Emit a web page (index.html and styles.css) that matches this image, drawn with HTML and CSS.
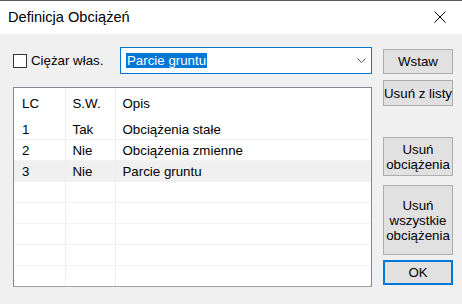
FILE: index.html
```html
<!DOCTYPE html>
<html lang="pl">
<head>
<meta charset="utf-8">
<title>Definicja Obciążeń</title>
<link rel="stylesheet" href="styles.css">
</head>
<body>
<div class="window">
  <div class="titlebar">
    <span class="title">Definicja Obciążeń</span>
    <span class="close">
      <svg width="12" height="12" viewBox="0 0 12 12"><path d="M0.5 0.5 L11.5 11.5 M11.5 0.5 L0.5 11.5" stroke="#000" stroke-width="1" fill="none"/></svg>
    </span>
  </div>
  <div class="content">
    <div class="main">
      <div class="toprow">
        <label class="check"><span class="box"></span><span class="check-label">Ciężar włas.</span></label>
        <div class="combo">
          <span class="sel">Parcie gruntu</span>
          <svg class="chev" width="9" height="5" viewBox="0 0 9 5"><path d="M0.5 0.5 L4.5 4.5 L8.5 0.5" stroke="#555" stroke-width="1" fill="none"/></svg>
        </div>
      </div>
      <div class="list">
        <table class="grid">
          <colgroup><col class="c1"><col class="c2"><col class="c3"></colgroup>
          <thead>
            <tr><th>LC</th><th>S.W.</th><th>Opis</th></tr>
          </thead>
          <tbody>
            <tr><td>1</td><td>Tak</td><td>Obciążenia stałe</td></tr>
            <tr><td>2</td><td>Nie</td><td>Obciążenia zmienne</td></tr>
            <tr class="hl"><td>3</td><td>Nie</td><td>Parcie gruntu</td></tr>
            <tr><td></td><td></td><td></td></tr>
            <tr><td></td><td></td><td></td></tr>
            <tr><td></td><td></td><td></td></tr>
            <tr><td></td><td></td><td></td></tr>
            <tr><td></td><td></td><td></td></tr>
          </tbody>
        </table>
      </div>
    </div>
    <div class="side">
      <button class="btn b-wstaw">Wstaw</button>
      <button class="btn b-usun">Usuń z listy</button>
      <button class="btn b-usun-obc">Usuń<br>obciążenia</button>
      <button class="btn b-usun-all">Usuń<br>wszystkie<br>obciążenia</button>
      <button class="btn b-ok">OK</button>
    </div>
  </div>
</div>
</body>
</html>
```

FILE: styles.css
```css
html, body {
  margin: 0;
  padding: 0;
  background: #f0f0f0;
}
.window {
  width: 462px;
  height: 304px;
  overflow: hidden;
  background: #f0f0f0;
  font-family: "Segoe UI", "Liberation Sans", Arial, sans-serif;
  font-size: 13.3px;
  color: #000;
  box-sizing: border-box;
  border-top: 1px solid #5a5a5a;
}
.titlebar {
  height: 33px;
  background: #fff;
  display: flex;
  align-items: center;
  justify-content: space-between;
}
.title {
  padding-left: 8px;
  font-size: 14.6px;
  padding-bottom: 2px;
}
.close {
  width: 44px;
  display: flex;
  justify-content: center;
  margin-right: 0;
  padding-bottom: 2px;
}
.content {
  display: grid;
  grid-template-columns: 359px 70px;
  column-gap: 11px;
  padding: 13px 0 0 13px;
}
.main {
  display: flex;
  flex-direction: column;
  gap: 13px;
}
.toprow {
  height: 27px;
  display: flex;
  align-items: center;
}
.check {
  display: flex;
  align-items: center;
}
.box {
  width: 14px;
  height: 14px;
  box-sizing: border-box;
  border: 1px solid #333;
  background: #fff;
}
.check-label {
  margin-left: 4px;
}
.combo {
  margin-left: auto;
  width: 252px;
  height: 27px;
  box-sizing: border-box;
  border: 1px solid #0078d7;
  background: #fff;
  display: flex;
  align-items: center;
  padding: 0 5px 0 5px;
}
.sel {
  background: #0078d7;
  color: #fff;
  padding: 0 1px;
  line-height: 15px;
}
.chev {
  margin-left: auto;
}
.list {
  height: 200px;
  box-sizing: border-box;
  border: 1px solid #828790;
  border-bottom-color: #a0a0a0;
  background: #fff;
  overflow: hidden;
}
.grid {
  width: 100%;
  border-collapse: collapse;
  table-layout: fixed;
}
.c1 { width: 51px; }
.c2 { width: 50px; }
.grid th, .grid td {
  text-align: left;
  font-weight: normal;
  padding: 0 0 0 7px;
  border-left: 1px solid #eeeeee;
  white-space: nowrap;
}
.grid th:first-child, .grid td:first-child {
  border-left: none;
  padding-left: 8px;
}
.grid th {
  height: 31px;
}
.grid td {
  height: 20px;
  border-top: 1px solid #f2f2f2;
}
.grid tbody tr:first-child td {
  border-top: none;
}
.grid tr.hl td {
  background: #f0f0f0;
}
.side {
  display: flex;
  flex-direction: column;
  padding-top: 2px;
}
.btn {
  font-family: inherit;
  font-size: 13.3px;
  color: #000;
  background: #e1e1e1;
  border: 1px solid #adadad;
  padding: 0;
  margin: 0;
  width: 70px;
  line-height: 15px;
}
.b-wstaw { height: 25px; }
.b-usun { height: 26px; margin-top: 6px; }
.b-usun-obc { height: 39px; margin-top: 31px; }
.b-usun-all { height: 70px; margin-top: 9px; }
.b-ok { height: 25px; margin-top: 5px; border: 2px solid #0078d7; }
```
